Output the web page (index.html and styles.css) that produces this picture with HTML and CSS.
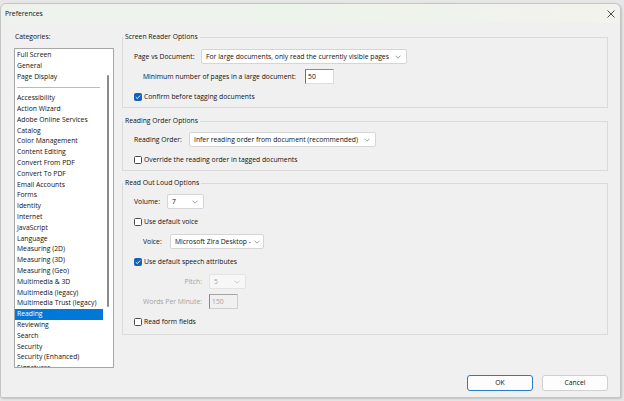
FILE: index.html
```html
<!DOCTYPE html>
<html>
<head>
<meta charset="utf-8">
<title>Preferences</title>
<link rel="stylesheet" href="styles.css">
</head>
<body>
<div class="window">
  <div class="titlebar">
    <span class="title">Preferences</span>
    <svg class="close" width="8" height="8" viewBox="0 0 8 8"><path d="M0.5 0.5 L7.5 7.5 M7.5 0.5 L0.5 7.5" stroke="#333" stroke-width="0.9" fill="none"/></svg>
  </div>
  <div class="main">
    <div class="left">
      <div class="cat-label">Categories:</div>
      <div class="listbox">
        <ul class="list">
          <li>Full Screen</li>
          <li>General</li>
          <li>Page Display</li>
          <li class="sep"><span class="sep-line"></span></li>
          <li>Accessibility</li>
          <li>Action Wizard</li>
          <li>Adobe Online Services</li>
          <li>Catalog</li>
          <li>Color Management</li>
          <li>Content Editing</li>
          <li>Convert From PDF</li>
          <li>Convert To PDF</li>
          <li>Email Accounts</li>
          <li>Forms</li>
          <li>Identity</li>
          <li>Internet</li>
          <li>JavaScript</li>
          <li>Language</li>
          <li>Measuring (2D)</li>
          <li>Measuring (3D)</li>
          <li>Measuring (Geo)</li>
          <li>Multimedia &amp; 3D</li>
          <li>Multimedia (legacy)</li>
          <li>Multimedia Trust (legacy)</li>
          <li class="selected">Reading</li>
          <li>Reviewing</li>
          <li>Search</li>
          <li>Security</li>
          <li>Security (Enhanced)</li>
          <li>Signatures</li>
        </ul>
        <div class="scrollbar"><div class="thumb"></div></div>
      </div>
    </div>
    <div class="right">
      <fieldset class="group g1">
        <legend>Screen Reader Options</legend>
        <div class="gbody">
          <div class="row">
            <span class="lbl w-page">Page vs Document:</span>
            <div class="select s-page"><span class="val">For large documents, only read the currently visible pages</span><svg class="chev" width="6" height="4" viewBox="0 0 6 4"><path d="M0.5 0.7 L3 3.2 L5.5 0.7" stroke="#888" stroke-width="0.8" fill="none"/></svg></div>
          </div>
          <div class="row">
            <span class="lbl indent w-min">Minimum number of pages in a large document:</span>
            <div class="input">50</div>
          </div>
          <div class="row">
            <span class="cb checked"><svg width="8" height="8" viewBox="0 0 8 8"><path d="M1.8 4.2 L3.3 5.6 L6.2 2.5" stroke="#fff" stroke-width="0.9" fill="none"/></svg></span>
            <span class="cb-lbl">Confirm before tagging documents</span>
          </div>
        </div>
      </fieldset>

      <fieldset class="group g2">
        <legend>Reading Order Options</legend>
        <div class="gbody">
          <div class="row">
            <span class="lbl w-order">Reading Order:</span>
            <div class="select s-order"><span class="val">Infer reading order from document (recommended)</span><svg class="chev" width="6" height="4" viewBox="0 0 6 4"><path d="M0.5 0.7 L3 3.2 L5.5 0.7" stroke="#888" stroke-width="0.8" fill="none"/></svg></div>
          </div>
          <div class="row">
            <span class="cb"></span>
            <span class="cb-lbl">Override the reading order in tagged documents</span>
          </div>
        </div>
      </fieldset>

      <fieldset class="group g3">
        <legend>Read Out Loud Options</legend>
        <div class="gbody">
          <div class="row">
            <span class="lbl w-vol">Volume:</span>
            <div class="select s-small"><span class="val">7</span><svg class="chev" width="6" height="4" viewBox="0 0 6 4"><path d="M0.5 0.7 L3 3.2 L5.5 0.7" stroke="#888" stroke-width="0.8" fill="none"/></svg></div>
          </div>
          <div class="row">
            <span class="cb"></span>
            <span class="cb-lbl">Use default voice</span>
          </div>
          <div class="row">
            <span class="lbl indent w-voice">Voice:</span>
            <div class="select s-voice"><span class="val">Microsoft Zira Desktop -</span><svg class="chev" width="6" height="4" viewBox="0 0 6 4"><path d="M0.5 0.7 L3 3.2 L5.5 0.7" stroke="#888" stroke-width="0.8" fill="none"/></svg></div>
          </div>
          <div class="row">
            <span class="cb checked"><svg width="8" height="8" viewBox="0 0 8 8"><path d="M1.8 4.2 L3.3 5.6 L6.2 2.5" stroke="#fff" stroke-width="0.9" fill="none"/></svg></span>
            <span class="cb-lbl">Use default speech attributes</span>
          </div>
          <div class="row">
            <span class="lbl disabled w-right">Pitch:</span>
            <div class="select s-small disabled"><span class="val">5</span><svg class="chev" width="6" height="4" viewBox="0 0 6 4"><path d="M0.5 0.7 L3 3.2 L5.5 0.7" stroke="#bbb" stroke-width="0.8" fill="none"/></svg></div>
          </div>
          <div class="row">
            <span class="lbl disabled w-right">Words Per Minute:</span>
            <div class="input disabled">150</div>
          </div>
          <div class="row">
            <span class="cb"></span>
            <span class="cb-lbl">Read form fields</span>
          </div>
        </div>
      </fieldset>
    </div>
  </div>
  <div class="footer">
    <button class="btn ok">OK</button>
    <button class="btn">Cancel</button>
  </div>
</div>
</body>
</html>
```

FILE: styles.css
```css
html, body {
  margin: 0;
  padding: 0;
}
body {
  background: #e6e6e6;
  font-family: "Open Sans", "Noto Sans", sans-serif;
  font-size: 6.8px;
  line-height: 10px;
  color: #111;
  width: 624px;
  height: 401px;
  overflow: hidden;
}
.window {
  margin-top: 3px;
  width: 619px;
  height: 393px;
  border: 1px solid #c4c4c4;
  border-radius: 6px 6px 2px 2px;
  background: #f0f0f0;
  display: flex;
  flex-direction: column;
  box-shadow: 1px 1px 2px rgba(0,0,0,0.15);
}
.titlebar {
  height: 19px;
  flex: none;
  display: flex;
  align-items: center;
  justify-content: space-between;
  padding: 0 5px 0 4px;
  border-radius: 6px 6px 0 0;
  background: linear-gradient(90deg, #eef2ed 0%, #edf4ec 45%, #f3f2ee 100%);
}
.close {
  display: block;
}
.main {
  display: flex;
  gap: 8px;
  padding: 9px 12px 0 13px;
}
.left {
  display: flex;
  flex-direction: column;
}
.cat-label {
  margin: 0 0 6px 1px;
}
.listbox {
  width: 98px;
  height: 318px;
  border: 1px solid #a7a7a7;
  background: #fff;
  display: flex;
  overflow: hidden;
}
.list {
  list-style: none;
  margin: 0;
  padding: 1px 0 0 0;
  width: 88px;
  flex: none;
}
.list li {
  height: 10.8px;
  line-height: 10.8px;
  padding-left: 2px;
  white-space: nowrap;
}
.list li.selected {
  background: #0078d7;
  color: #fff;
}
.list li.sep {
  display: flex;
  align-items: center;
  padding: 0 3px 0 2px;
}
.sep-line {
  display: block;
  height: 1px;
  flex: 1;
  background: #9cc3e6;
}
.scrollbar {
  width: 10px;
  flex: none;
}
.thumb {
  width: 2px;
  height: 232px;
  margin: 26px 0 0 4px;
  background: #8a8a8a;
  border-radius: 1px;
}
.right {
  width: 486px;
  display: flex;
  flex-direction: column;
}
.group {
  margin: 0;
  padding: 0;
  border: 1px solid #dadada;
  min-inline-size: 0;
}
.group legend {
  padding: 0 2px;
  line-height: 10px;
}
.g2 { margin-top: 8px; }
.g3 { margin-top: 7px; }
.gbody {
  padding: 7px 10px 3px 11px;
  display: flex;
  flex-direction: column;
  gap: 5px;
}
.g2 .gbody { padding-top: 6px; padding-bottom: 3px; }
.g3 .gbody { padding-top: 6px; padding-bottom: 5px; }
.row {
  display: flex;
  align-items: center;
  height: 15px;
}
.lbl {
  flex: none;
  white-space: nowrap;
}
.lbl.indent { margin-left: 9px; }
.w-page { width: 67px; }
.w-min { width: 162px; }
.w-order { width: 55px; }
.w-vol { width: 33px; }
.w-voice { width: 27px; margin-left: 10px; }
.w-right { width: 68px; text-align: right; margin-right: 7px; }
.lbl.disabled { color: #a3a3a3; }
.select {
  box-sizing: border-box;
  height: 15px;
  border: 1px solid #d5d5d5;
  border-radius: 2px;
  background: #fff;
  display: flex;
  align-items: center;
  padding: 0 5px 0 4px;
  gap: 3px;
  overflow: hidden;
}
.select .val {
  flex: 1;
  white-space: nowrap;
}
.chev {
  flex: none;
  display: block;
}
.s-page { width: 206px; }
.s-order { width: 187px; }
.s-small { width: 37px; }
.s-voice { width: 94px; }
.select.disabled {
  background: #f7f7f7;
  border-color: #e3e3e3;
  color: #a3a3a3;
}
.input {
  box-sizing: border-box;
  width: 29px;
  height: 15px;
  background: #fff;
  border: 1px solid #dcdcdc;
  border-top-color: #8a8a8a;
  border-left-color: #6e6e6e;
  padding-left: 2px;
  line-height: 13px;
}
.input.disabled {
  background: #f0f0f0;
  color: #a3a3a3;
  border-color: #cfcfcf;
  border-left-color: #8a8a8a;
  border-top-color: #a5a5a5;
}
.cb {
  box-sizing: border-box;
  width: 8px;
  height: 8px;
  border: 1px solid #4a4a4a;
  border-radius: 1.5px;
  background: #fff;
  flex: none;
  display: flex;
}
.cb.checked {
  background: #1560b8;
  border-color: #1560b8;
}
.cb svg {
  display: block;
  margin: -1px;
}
.cb-lbl {
  margin-left: 2px;
  white-space: nowrap;
}
.footer {
  margin-top: auto;
  display: flex;
  justify-content: flex-end;
  gap: 9px;
  padding: 0 12px 6px 0;
}
.btn {
  box-sizing: border-box;
  width: 66px;
  height: 16px;
  border: 1px solid #d0d0d0;
  border-radius: 3px;
  background: #fdfdfd;
  font-family: inherit;
  font-size: inherit;
  color: #111;
  padding: 0;
  line-height: 14px;
}
.btn.ok {
  border-color: #2c7acb;
}
```
